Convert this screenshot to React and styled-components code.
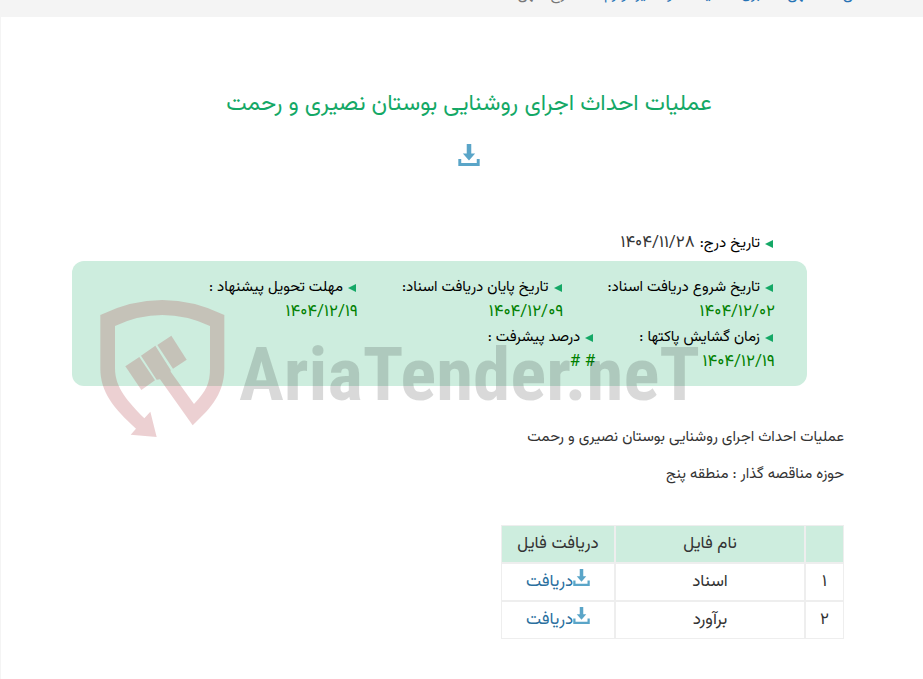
import React from "react";
import styled, { createGlobalStyle } from "styled-components";

const dates = [
  { label: "تاریخ شروع دریافت اسناد:", value: "۱۴۰۴/۱۲/۰۲" },
  { label: "تاریخ پایان دریافت اسناد:", value: "۱۴۰۴/۱۲/۰۹" },
  { label: "مهلت تحویل پیشنهاد :", value: "۱۴۰۴/۱۲/۱۹" },
  { label: "زمان گشایش پاکتها :", value: "۱۴۰۴/۱۲/۱۹" },
  { label: "درصد پیشرفت :", value: "# #" },
];

const files = [
  { id: "۱", name: "اسناد" },
  { id: "۲", name: "برآورد" },
];

function DownloadIcon({ size }) {
  return (
    <svg width={size} height={size} viewBox="0 0 66 68" fill="#5aa5c8" aria-hidden="true">
      <path d="M26 0h14v29h12L33 51 14 29h12z" />
      <path d="M0 46h9v13h48V46h9v22H0z" />
    </svg>
  );
}

function Shield() {
  return (
    <svg
      width="125"
      height="138"
      viewBox="120 132 375 414"
      fill="rgba(168, 41, 50, 0.22)"
      aria-hidden="true"
    >
      <path d="M121 180Q213 135 307 135T493 180V340C493 425 440 470 398 511L300 373 290 374 243 302 286 272 332 345V350L402 447C440 407 450 385 450 340V213Q380 180 307 180T165 213V340C165 400 205 440 253 490L271 470 290 546 212 539 228 521C160 460 121 410 121 340Z" />
      <path d="M196 334L238 306 285 376 244 405Z" />
      <path d="M292 270L334 242 380 314 339 341Z" />
    </svg>
  );
}

export default function App() {
  return (
    <Page dir="rtl">
      <GlobalStyle />
      <Breadcrumb aria-label="مسیر">
        <a href="#home">صفحه اصلی</a>
        <a href="#ads">آگهی</a>
        <a href="#category">برق، تاسیسات و سایر لوازم</a>
        <span>شرح آگهی</span>
      </Breadcrumb>

      <Head>
        <h1>عملیات احداث اجرای روشنایی بوستان نصیری و رحمت</h1>
        <a href="#download" aria-label="دریافت">
          <DownloadIcon size={22} />
        </a>
      </Head>

      <Content>
        <Published>
          <Label>تاریخ درج:</Label> <span>۱۴۰۴/۱۱/۲۸</span>
        </Published>

        <Panel>
          {dates.map(({ label, value }) => (
            <Item key={label}>
              <Label>{label}</Label>
              <Value>{value}</Value>
            </Item>
          ))}
          <Watermark dir="ltr">
            <Shield />
            <span>AriaTender.neT</span>
          </Watermark>
        </Panel>

        <Text>عملیات احداث اجرای روشنایی بوستان نصیری و رحمت</Text>
        <Text>حوزه مناقصه گذار : منطقه پنج</Text>

        <Files>
          <thead>
            <tr>
              <NumberCell as="th" />
              <NameCell as="th">نام فایل</NameCell>
              <LinkCell as="th">دریافت فایل</LinkCell>
            </tr>
          </thead>
          <tbody>
            {files.map(({ id, name }) => (
              <tr key={id}>
                <NumberCell>{id}</NumberCell>
                <NameCell>{name}</NameCell>
                <LinkCell>
                  <FileLink href="#file">
                    <DownloadIcon size={17} />
                    دریافت
                  </FileLink>
                </LinkCell>
              </tr>
            ))}
          </tbody>
        </Files>
      </Content>
    </Page>
  );
}

const GlobalStyle = createGlobalStyle`
  * {
    box-sizing: border-box;
  }

  body {
    margin: 0;
    background-color: #fff;
    color: #333;
    font-family: "Vazirmatn", "DejaVu Sans", sans-serif;
    font-size: 15px;
  }

  a {
    color: #2a6f9e;
    text-decoration: none;
  }
`;

const Page = styled.div`
  border-left: 1px solid #f4f4f4;
`;

const Breadcrumb = styled.nav`
  display: flex;
  align-items: flex-end;
  gap: 26px;
  height: 17px;
  padding: 0 8px 12px;
  overflow: hidden;
  background-color: #f4f4f4;
  color: #777;
  line-height: 20px;
  white-space: nowrap;

  a {
    color: #2572b4;
  }
`;

const Head = styled.header`
  display: flex;
  align-items: center;
  flex-direction: column;
  gap: 20px;
  padding: 67px 0 0 14px;

  h1 {
    margin: 0;
    font-size: 23px;
    font-weight: 400;
    line-height: 40px;
    color: #14a866;
  }

  a {
    display: flex;
  }
`;

const Content = styled.main`
  padding: 65px 79px 40px 71px;
`;

const Published = styled.p`
  display: flex;
  gap: 5px;
  margin: 0 69px 5px 0;
  line-height: 25px;

  span {
    font-size: 17px;
  }
`;

const Label = styled.strong`
  display: flex;
  align-items: center;
  gap: 5px;
  padding-right: 2px;
  font-size: 15px;
  font-weight: 400;
  color: #000;

  &::before {
    content: "";
    border: 4px solid transparent;
    border-right: 8px solid #14a866;
    border-left: 0;
  }
`;

const Panel = styled.section`
  position: relative;
  display: flex;
  flex-wrap: wrap;
  column-gap: 44px;
  margin-right: 37px;
  padding: 14px 32px 11px;
  border-radius: 12px;
  background-color: #cdedde;
  line-height: 25px;
`;

const Item = styled.div`
  display: flex;
  flex-direction: column;
`;

const Value = styled.span`
  font-size: 17px;
  color: #008000;
`;

const Watermark = styled.div`
  position: absolute;
  top: 38px;
  left: 28px;
  display: flex;
  align-items: center;
  gap: 14px;
  pointer-events: none;

  span {
    padding-top: 12px;
    font: 700 75px "Roboto Condensed", "Liberation Sans Narrow", sans-serif;
    color: rgba(0, 0, 0, 0.15);
  }
`;

const Text = styled.p`
  margin: 0 0 12px;
  line-height: 25px;

  ${Panel} + & {
    margin-top: 39px;
  }
`;

const Files = styled.table`
  margin-top: 38px;
  border: 0;
  border-spacing: 0;
  font-size: 17px;
  text-align: center;

  th {
    background-color: #cdedde;
    font-weight: 400;
  }
`;

const Cell = styled.td`
  height: 38px;
  padding: 0;
  border: 1px solid #eee;
`;

const NumberCell = styled(Cell)`
  width: 39px;
`;

const NameCell = styled(Cell)`
  width: 190px;
`;

const LinkCell = styled(Cell)`
  width: 114px;
`;

const FileLink = styled.a`
  display: flex;
  justify-content: center;
`;
